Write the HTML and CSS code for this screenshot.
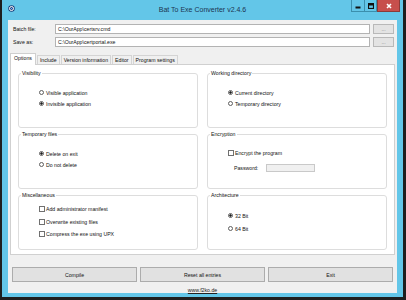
FILE: index.html
```html
<!DOCTYPE html>
<html lang="en">
<head>
  <meta charset="UTF-8">
  <title>Bat To Exe Converter v2.4.6</title>
  <link rel="stylesheet" href="styles.css">
</head>
<body>
  <div class="window">
    <!-- Title bar -->
    <div class="titlebar">
      <svg class="app-icon" width="7" height="7" viewBox="0 0 14 14">
        <circle cx="7" cy="7" r="6.5" fill="#1d3f7a"/>
        <circle cx="7" cy="7" r="4" fill="none" stroke="#fff" stroke-width="2"/>
        <circle cx="7" cy="7" r="1.5" fill="#7fb2ff"/>
      </svg>
      <div class="title">Bat To Exe Converter v2.4.6</div>
      <div class="controls">
        <span class="ctl ctl-min">
          <svg width="6" height="6" viewBox="0 0 6 6"><rect x="0.5" y="3.5" width="5" height="2" fill="#111"/></svg>
        </span>
        <span class="ctl ctl-max">
          <svg width="6" height="6" viewBox="0 0 6 6"><rect x="0.5" y="0.5" width="5" height="5" fill="none" stroke="#111" stroke-width="1.2"/><rect x="0.5" y="0.5" width="5" height="2" fill="#111"/></svg>
        </span>
        <span class="ctl ctl-close">
          <svg width="6" height="6" viewBox="0 0 6 6"><path d="M1 1 L5 5 M5 1 L1 5" stroke="#fff" stroke-width="1.6"/></svg>
        </span>
      </div>
    </div>

    <div class="client">
      <!-- Source / target -->
      <div class="files">
        <span class="file-label">Batch file:</span>
        <div class="field">C:\OurApp\certsrv.cmd</div>
        <button class="browse">...</button>

        <span class="file-label">Save as:</span>
        <div class="field">C:\OurApp\certportal.exe</div>
        <button class="browse">...</button>
      </div>

      <!-- Tabs -->
      <div class="tabs">
        <span class="tab active">Options</span>
        <span class="tab">Include</span>
        <span class="tab">Version information</span>
        <span class="tab">Editor</span>
        <span class="tab">Program settings</span>
      </div>

      <div class="panel">
        <fieldset class="group">
          <legend>Visibility</legend>
          <div class="opts">
            <div class="opt"><span class="radio"></span>Visible application</div>
            <div class="opt"><span class="radio checked"></span>Invisible application</div>
          </div>
        </fieldset>

        <fieldset class="group">
          <legend>Working directory</legend>
          <div class="opts">
            <div class="opt"><span class="radio checked"></span>Current directory</div>
            <div class="opt"><span class="radio"></span>Temporary directory</div>
          </div>
        </fieldset>

        <fieldset class="group">
          <legend>Temporary files</legend>
          <div class="opts">
            <div class="opt"><span class="radio checked"></span>Delete on exit</div>
            <div class="opt"><span class="radio"></span>Do not delete</div>
          </div>
        </fieldset>

        <fieldset class="group">
          <legend>Encryption</legend>
          <div class="opts opts-enc">
            <div class="opt"><span class="check"></span>Encrypt the program</div>
            <div class="password-row">
              <span>Password:</span>
              <span class="pw-field"></span>
            </div>
          </div>
        </fieldset>

        <fieldset class="group">
          <legend>Miscellaneous</legend>
          <div class="opts opts-misc">
            <div class="opt"><span class="check"></span>Add administrator manifest</div>
            <div class="opt"><span class="check"></span>Overwrite existing files</div>
            <div class="opt"><span class="check"></span>Compress the exe using UPX</div>
          </div>
        </fieldset>

        <fieldset class="group">
          <legend>Architecture</legend>
          <div class="opts opts-arch">
            <div class="opt"><span class="radio checked"></span>32 Bit</div>
            <div class="opt"><span class="radio"></span>64 Bit</div>
          </div>
        </fieldset>
      </div>

      <!-- Actions -->
      <div class="actions">
        <button class="btn">Compile</button>
        <button class="btn">Reset all entries</button>
        <button class="btn">Exit</button>
      </div>

      <div class="footer">
        <a href="#">www.f2ko.de</a>
      </div>
    </div>
  </div>
</body>
</html>
```

FILE: styles.css
```css
body {
  margin: 0;
  background-color: #1c1c1c;
  font-family: "Liberation Sans", Arial, sans-serif;
  font-size: 5.2px;
  color: #111;
}

.window {
  width: 406px;
  height: 300px;
  box-sizing: border-box;
  border: 3px solid #1e1e1e;
  border-top: none;
  border-left-width: 2px;
  background-color: #63c6e8;
  display: flex;
  flex-direction: column;
}

/* Title bar */
.titlebar {
  height: 20px;
  flex-shrink: 0;
  display: grid;
  grid-template-columns: 1fr auto 1fr;
}

.app-icon {
  margin: 5px 0 0 6px;
}

.title {
  font-size: 7px;
  line-height: 19px;
  color: #1c3550;
}

.controls {
  justify-self: end;
  display: flex;
  height: 12px;
  margin-right: 3px;
}

.ctl {
  display: flex;
  align-items: center;
  justify-content: center;
  box-sizing: border-box;
  height: 12px;
  border: 1px solid #3b8fad;
  border-top: none;
}

.ctl-min {
  width: 13px;
  border-right: none;
}

.ctl-max {
  width: 13px;
}

.ctl-close {
  width: 23px;
  background-color: #c74f4c;
  border-color: #8c3a38;
}

/* Client area */
.client {
  flex: 1;
  margin: 0 6px 4px 6px;
  background-color: #f0f0f0;
  display: flex;
  flex-direction: column;
}

.files {
  display: grid;
  grid-template-columns: 39px 1fr 21px;
  column-gap: 3px;
  row-gap: 3px;
  padding: 4px 3px 0 5px;
}

.file-label {
  line-height: 10px;
}

.field {
  height: 10px;
  box-sizing: border-box;
  border: 1px solid #b3b3b3;
  background-color: #fff;
  padding-left: 2px;
  line-height: 8px;
}

.browse {
  height: 10px;
  padding: 0;
  box-sizing: border-box;
  border: 1px solid #b8b8b8;
  background-color: #e3e3e3;
  font-family: inherit;
  font-size: 5px;
  line-height: 6px;
  color: #777;
}

/* Tabs */
.tabs {
  display: flex;
  align-items: flex-end;
  gap: 1px;
  margin: 6px 0 0 2px;
  position: relative;
  z-index: 1;
}

.tab {
  height: 9px;
  line-height: 9px;
  padding: 0 2px;
  box-sizing: border-box;
  border: 1px solid #d4d4d4;
  border-bottom: none;
  background-color: #f0f0f0;
}

.tab.active {
  height: 12px;
  line-height: 9px;
  padding: 0 3px;
  margin-bottom: -1px;
  background-color: #fff;
  border-color: #cfcfcf;
}

.panel {
  margin: 0 2px;
  background-color: #fff;
  border: 1px solid #d0d0d0;
  display: grid;
  grid-template-columns: 1fr 1fr;
  grid-template-rows: 58px 58px 58px;
  column-gap: 9px;
  row-gap: 3px;
  padding: 5px 7px 4px 7px;
}

.group {
  margin: 0;
  min-width: 0;
  padding: 0 0 0 20px;
  border: 1px solid #dddddd;
  border-radius: 3px;
}

.group legend {
  margin-left: -18px;
  padding: 0 1px;
  line-height: 6px;
}

.opts {
  display: flex;
  flex-direction: column;
  padding-top: 11px;
}

.opt {
  display: flex;
  align-items: center;
  height: 11px;
}

.opts-misc {
  padding-top: 5px;
}

.opts-misc .opt {
  height: 12.5px;
}

.opts-enc {
  padding-top: 10px;
}

.opts-arch .opt {
  height: 13px;
}

.radio {
  width: 5px;
  height: 5px;
  box-sizing: border-box;
  border: 1px solid #5e5e5e;
  border-radius: 50%;
  background-color: #fff;
  margin-right: 2px;
}

.radio.checked {
  background: radial-gradient(circle, #1a1a1a 0 45%, #fff 55%);
}

.check {
  width: 6px;
  height: 6px;
  box-sizing: border-box;
  border: 1px solid #707070;
  background-color: #fff;
  margin-right: 1px;
}

.password-row {
  display: flex;
  align-items: center;
  margin: 6px 0 0 6px;
  gap: 8px;
}

.pw-field {
  width: 49px;
  height: 8px;
  box-sizing: border-box;
  border: 1px solid #c9c9c9;
  background-color: #f0f0f0;
}

/* Bottom buttons */
.actions {
  display: grid;
  grid-template-columns: 1fr 1fr 1fr;
  gap: 3px;
  padding: 0 4px;
  margin-top: 12px;
}

.btn {
  height: 15px;
  padding: 0;
  border: 1px solid #acacac;
  background-color: #e1e1e1;
  font-family: inherit;
  font-size: 5.2px;
  color: #111;
}

.footer {
  text-align: center;
  margin-top: 5px;
  line-height: 6px;
}

.footer a {
  color: #222;
}
```
